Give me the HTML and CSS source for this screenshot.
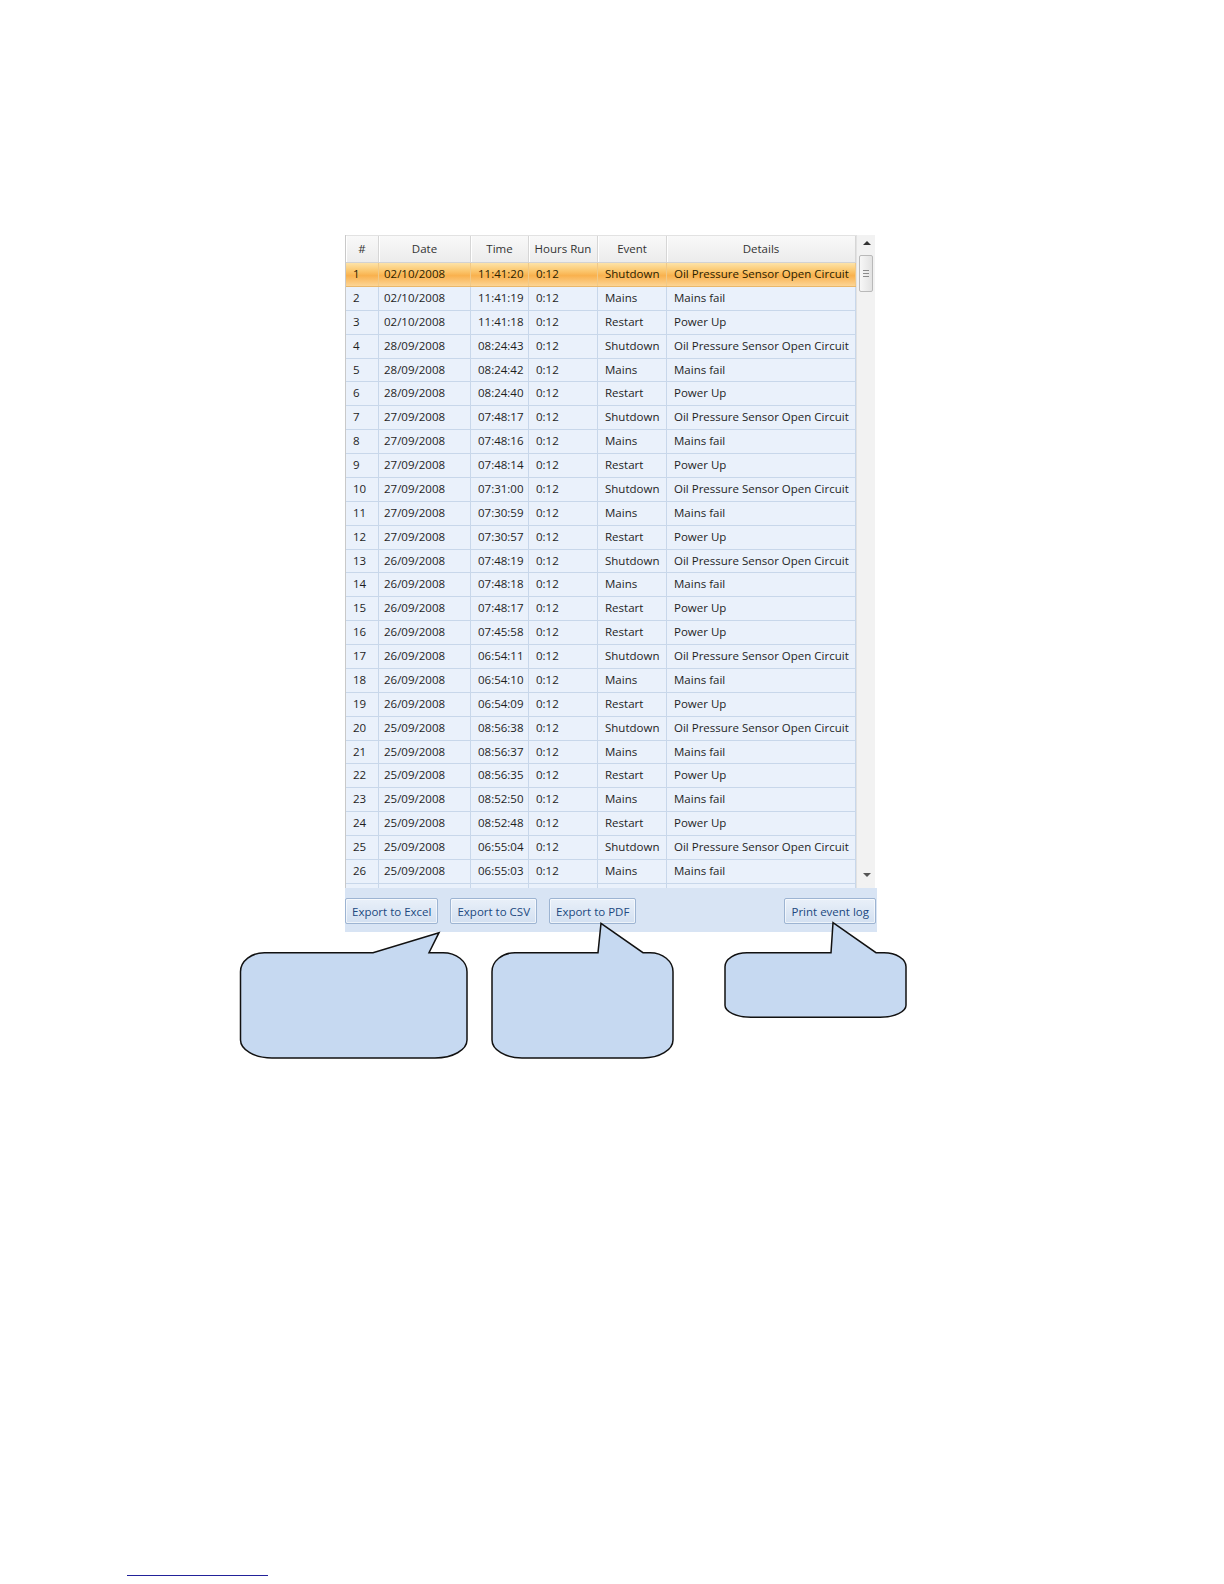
FILE: index.html
```html
<!DOCTYPE html>
<html lang="en">
<head>
  <meta charset="UTF-8" />
  <title>Event Log</title>
  <link rel="stylesheet" href="styles.css">
</head>
<body>
  <div class="page">
    <div class="event-grid">
      <div class="grid-main">
        <div class="rows">
          <div class="row head">
            <div>#</div><div>Date</div><div>Time</div><div>Hours Run</div><div>Event</div><div>Details</div>
          </div>
          <div class="row selected"><div>1</div><div>02/10/2008</div><div>11:41:20</div><div>0:12</div><div>Shutdown</div><div>Oil Pressure Sensor Open Circuit</div></div>
          <div class="row"><div>2</div><div>02/10/2008</div><div>11:41:19</div><div>0:12</div><div>Mains</div><div>Mains fail</div></div>
          <div class="row"><div>3</div><div>02/10/2008</div><div>11:41:18</div><div>0:12</div><div>Restart</div><div>Power Up</div></div>
          <div class="row"><div>4</div><div>28/09/2008</div><div>08:24:43</div><div>0:12</div><div>Shutdown</div><div>Oil Pressure Sensor Open Circuit</div></div>
          <div class="row"><div>5</div><div>28/09/2008</div><div>08:24:42</div><div>0:12</div><div>Mains</div><div>Mains fail</div></div>
          <div class="row"><div>6</div><div>28/09/2008</div><div>08:24:40</div><div>0:12</div><div>Restart</div><div>Power Up</div></div>
          <div class="row"><div>7</div><div>27/09/2008</div><div>07:48:17</div><div>0:12</div><div>Shutdown</div><div>Oil Pressure Sensor Open Circuit</div></div>
          <div class="row"><div>8</div><div>27/09/2008</div><div>07:48:16</div><div>0:12</div><div>Mains</div><div>Mains fail</div></div>
          <div class="row"><div>9</div><div>27/09/2008</div><div>07:48:14</div><div>0:12</div><div>Restart</div><div>Power Up</div></div>
          <div class="row"><div>10</div><div>27/09/2008</div><div>07:31:00</div><div>0:12</div><div>Shutdown</div><div>Oil Pressure Sensor Open Circuit</div></div>
          <div class="row"><div>11</div><div>27/09/2008</div><div>07:30:59</div><div>0:12</div><div>Mains</div><div>Mains fail</div></div>
          <div class="row"><div>12</div><div>27/09/2008</div><div>07:30:57</div><div>0:12</div><div>Restart</div><div>Power Up</div></div>
          <div class="row"><div>13</div><div>26/09/2008</div><div>07:48:19</div><div>0:12</div><div>Shutdown</div><div>Oil Pressure Sensor Open Circuit</div></div>
          <div class="row"><div>14</div><div>26/09/2008</div><div>07:48:18</div><div>0:12</div><div>Mains</div><div>Mains fail</div></div>
          <div class="row"><div>15</div><div>26/09/2008</div><div>07:48:17</div><div>0:12</div><div>Restart</div><div>Power Up</div></div>
          <div class="row"><div>16</div><div>26/09/2008</div><div>07:45:58</div><div>0:12</div><div>Restart</div><div>Power Up</div></div>
          <div class="row"><div>17</div><div>26/09/2008</div><div>06:54:11</div><div>0:12</div><div>Shutdown</div><div>Oil Pressure Sensor Open Circuit</div></div>
          <div class="row"><div>18</div><div>26/09/2008</div><div>06:54:10</div><div>0:12</div><div>Mains</div><div>Mains fail</div></div>
          <div class="row"><div>19</div><div>26/09/2008</div><div>06:54:09</div><div>0:12</div><div>Restart</div><div>Power Up</div></div>
          <div class="row"><div>20</div><div>25/09/2008</div><div>08:56:38</div><div>0:12</div><div>Shutdown</div><div>Oil Pressure Sensor Open Circuit</div></div>
          <div class="row"><div>21</div><div>25/09/2008</div><div>08:56:37</div><div>0:12</div><div>Mains</div><div>Mains fail</div></div>
          <div class="row"><div>22</div><div>25/09/2008</div><div>08:56:35</div><div>0:12</div><div>Restart</div><div>Power Up</div></div>
          <div class="row"><div>23</div><div>25/09/2008</div><div>08:52:50</div><div>0:12</div><div>Mains</div><div>Mains fail</div></div>
          <div class="row"><div>24</div><div>25/09/2008</div><div>08:52:48</div><div>0:12</div><div>Restart</div><div>Power Up</div></div>
          <div class="row"><div>25</div><div>25/09/2008</div><div>06:55:04</div><div>0:12</div><div>Shutdown</div><div>Oil Pressure Sensor Open Circuit</div></div>
          <div class="row"><div>26</div><div>25/09/2008</div><div>06:55:03</div><div>0:12</div><div>Mains</div><div>Mains fail</div></div>
          <div class="row"><div></div><div></div><div></div><div></div><div></div><div></div></div>
        </div>
        <div class="scrollbar">
          <span class="arrow up"></span>
          <div class="thumb"><span></span><span></span><span></span></div>
          <span class="arrow down"></span>
        </div>
      </div>
      <div class="grid-footer">
        <button class="grid-btn">Export to Excel</button>
        <button class="grid-btn">Export to CSV</button>
        <button class="grid-btn">Export to PDF</button>
        <button class="grid-btn print">Print event log</button>
      </div>
    </div>

    <svg class="callouts" width="1224" height="1100" viewBox="0 0 1224 1100">
      <!-- excel -->
      <path d="M265 952.7 L373 952.7 L439 932.7 L429 952.7 L443 952.7 A24 19 0 0 1 467 971.7 L467 1040 A32 18 0 0 1 435 1058 L272 1058 A32 18 0 0 1 240.5 1040 L240.5 971.7 A24 19 0 0 1 265 952.7 Z"/>
      <!-- pdf -->
      <path d="M515 952.7 L598 952.7 L601 923.3 L643 952.7 L650 952.7 A23 19 0 0 1 673 971.7 L673 1040 A30 18 0 0 1 643 1058 L522 1058 A30 18 0 0 1 492 1040 L492 971.7 A23 19 0 0 1 515 952.7 Z"/>
      <!-- print -->
      <path d="M747 952.7 L831 952.7 L833 922.7 L876 952.7 L884 952.7 A22 14 0 0 1 906 966.7 L906 1005 A26 12 0 0 1 880 1017.3 L751 1017.3 A26 12 0 0 1 725 1005 L725 966.7 A22 14 0 0 1 747 952.7 Z"/>
    </svg>

    <div class="footnote-rule"></div>
  </div>
</body>
</html>
```

FILE: styles.css
```css
html, body {
  margin: 0;
  padding: 0;
  background: #ffffff;
}
.page {
  position: relative;
  width: 1224px;
  padding-top: 235px;
  font-family: 'Open Sans', 'Liberation Sans', sans-serif;
  font-size: 11.5px;
  color: #1e1e1e;
}
.event-grid {
  margin-left: 345px;
  width: 532px;
}
.grid-main {
  display: flex;
  height: 653px;
  overflow: hidden;
  border-left: 1px solid #c9c9c9;
  box-sizing: border-box;
}
.rows {
  width: 510px;
  flex: none;
  background: #eaf1fb;
}
.row {
  display: grid;
  grid-template-columns: 33px 92px 58px 69px 69px 189px;
  height: 23.88px;
  box-sizing: border-box;
  border-bottom: 1px solid #c8d7ea;
}
.row > div {
  border-right: 1px solid #c8d7ea;
  padding-left: 7px;
  line-height: 22.5px;
  white-space: nowrap;
  overflow: hidden;
}
.row > div:nth-child(2) {
  padding-left: 5px;
}
.row.head {
  height: 28px;
  background: linear-gradient(#f9f9f9, #ececec);
  border-top: 1px solid #e2e2e2;
  border-bottom: 1px solid #d2d2d2;
  color: #333;
}
.row.head > div {
  text-align: center;
  padding-left: 0;
  line-height: 26px;
  border-right: 1px solid #d6d6d6;
  box-shadow: inset 1px 0 0 #ffffff;
}
.row.selected {
  background: linear-gradient(#fde3a8 0%, #fbc66d 35%, #f9b14e 55%, #fcd595 100%);
  border-bottom-color: #e9b76a;
  color: #2a2200;
}
.row.selected > div {
  border-right-color: #f0c988;
}

.scrollbar {
  flex: 1;
  position: relative;
  background: #f2f2f2;
  border-left: 1px solid #e2e2e2;
  margin-right: 2px;
}
.arrow {
  position: absolute;
  left: 6px;
  width: 0;
  height: 0;
  border-left: 4px solid transparent;
  border-right: 4px solid transparent;
}
.arrow.up {
  top: 6px;
  border-bottom: 4px solid #333;
}
.arrow.down {
  top: 638px;
  border-top: 4px solid #555;
}
.thumb {
  margin: 20px 2px 0 2px;
  height: 37px;
  border: 1px solid #b9b9b9;
  border-radius: 2px;
  background: linear-gradient(90deg, #f7f7f7, #e2e2e2);
  display: flex;
  flex-direction: column;
  justify-content: center;
  align-items: center;
  gap: 2px;
  box-sizing: border-box;
}
.thumb span {
  width: 6px;
  height: 1px;
  background: #8a8a8a;
}

.grid-footer {
  display: flex;
  gap: 12px;
  height: 44px;
  padding-top: 10px;
  box-sizing: border-box;
  background: #d8e4f4;
}
.grid-btn {
  height: 26px;
  padding: 0 6px;
  font-family: 'Open Sans', 'Liberation Sans', sans-serif;
  font-size: 11.5px;
  color: #20487f;
  background: linear-gradient(#e9f0f9, #d3e0f1);
  border: 1px solid #9db4d2;
  border-radius: 2px;
  box-shadow: inset 0 0 0 1px rgba(255, 255, 255, 0.6);
}
.grid-btn.print {
  margin-left: auto;
  margin-right: 1px;
}

.callouts {
  position: absolute;
  left: 0;
  top: 0;
  pointer-events: none;
}
.callouts path {
  fill: #c6d9f1;
  stroke: #111;
  stroke-width: 1.5;
  stroke-linejoin: miter;
}

.footnote-rule {
  margin: 643px 0 0 127px;
  width: 141px;
  height: 0;
  border-top: 1.5px solid #22229a;
}
```
